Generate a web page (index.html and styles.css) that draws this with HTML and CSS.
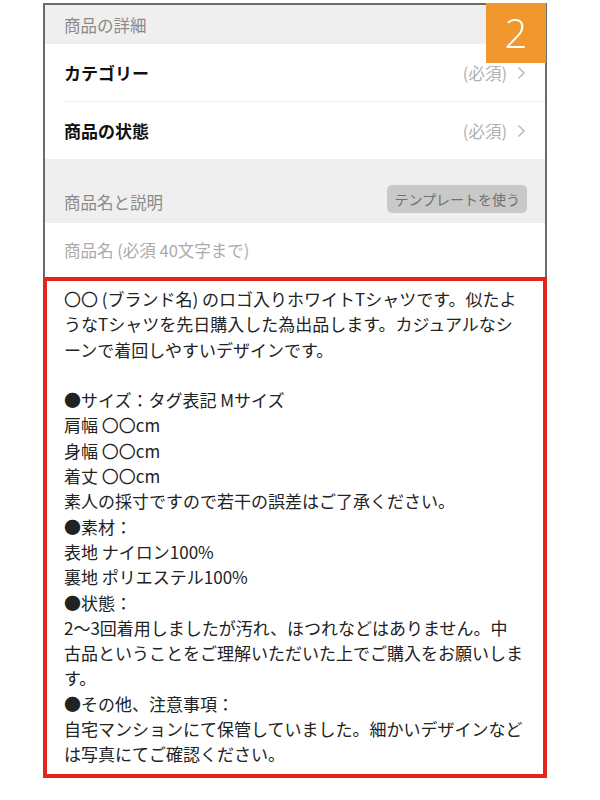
FILE: index.html
```html
<!DOCTYPE html>
<html lang="ja">
<head>
<meta charset="utf-8">
<link rel="stylesheet" href="styles.css">
</head>
<body>
<div class="page">
  <div class="frame">
    <div class="band band-top"><span class="band-label">商品の詳細</span></div>
    <div class="row">
      <span class="row-label">カテゴリー</span>
      <span class="row-right">(必須)<svg class="chev" width="9" height="14" viewBox="0 0 9 14"><polyline points="1.5,1.5 7,7 1.5,12.5" fill="none" stroke="#bcbcbc" stroke-width="1.6"/></svg></span>
    </div>
    <div class="row row-last">
      <span class="row-label">商品の状態</span>
      <span class="row-right">(必須)<svg class="chev" width="9" height="14" viewBox="0 0 9 14"><polyline points="1.5,1.5 7,7 1.5,12.5" fill="none" stroke="#bcbcbc" stroke-width="1.6"/></svg></span>
    </div>
    <div class="band band-mid">
      <span class="band-label">商品名と説明</span>
      <span class="tpl-btn">テンプレートを使う</span>
    </div>
    <div class="field">商品名 (必須 40文字まで)</div>
  </div>
  <div class="desc">
    〇〇 (ブランド名) のロゴ入りホワイトTシャツです。似たよ<br>
    うなTシャツを先日購入した為出品します。カジュアルなシ<br>
    ーンで着回しやすいデザインです。<br>
    <br>
    ●サイズ：タグ表記 Mサイズ<br>
    肩幅 〇〇cm<br>
    身幅 〇〇cm<br>
    着丈 〇〇cm<br>
    素人の採寸ですので若干の誤差はご了承ください。<br>
    ●素材：<br>
    表地 ナイロン100%<br>
    裏地 ポリエステル100%<br>
    ●状態：<br>
    2〜3回着用しましたが汚れ、ほつれなどはありません。中<br>
    古品ということをご理解いただいた上でご購入をお願いしま<br>
    す。<br>
    ●その他、注意事項：<br>
    自宅マンションにて保管していました。細かいデザインなど<br>
    は写真にてご確認ください。
  </div>
  <div class="badge">2</div>
</div>
</body>
</html>
```
FILE: styles.css
```css
html, body {
  margin: 0;
  padding: 0;
  background: #ffffff;
}
body {
  font-family: "Noto Sans CJK JP", "Noto Sans", sans-serif;
  color: #222222;
}
.page {
  position: relative;
  width: 600px;
  height: 800px;
  padding-top: 3px;
  box-sizing: border-box;
}
.frame {
  margin-left: 43px;
  width: 504px;
  box-sizing: border-box;
  border: 2px solid #6b6b6b;
  border-bottom: none;
}
.band {
  background: #efefef;
  display: flex;
  align-items: center;
  justify-content: space-between;
  padding: 0 18px 0 19px;
}
.band-top {
  height: 39px;
}
.band-mid {
  height: 64px;
  align-items: flex-end;
  padding-bottom: 9px;
  box-sizing: border-box;
}
.band-label {
  font-size: 16.5px;
  color: #8a8a8a;
  line-height: 22px;
}
.band-mid .band-label {
  margin-bottom: 1px;
}
.tpl-btn {
  background: #c9c9c9;
  color: #707070;
  font-size: 14px;
  line-height: 28px;
  height: 28px;
  padding: 0 7px;
  border-radius: 5px;
  margin-bottom: 1px;
}
.row {
  height: 57px;
  margin-left: 19px;
  padding-right: 19px;
  display: flex;
  align-items: center;
  justify-content: space-between;
  border-bottom: 1px solid #f0f0f0;
}
.row-last {
  border-bottom: none;
}
.row-label {
  font-size: 17px;
  font-weight: 700;
  color: #111111;
}
.row-right {
  display: flex;
  align-items: center;
  gap: 10px;
  font-size: 16.5px;
  color: #b0b0b0;
}
.field {
  height: 54px;
  display: flex;
  align-items: center;
  padding-left: 19px;
  font-size: 16.5px;
  color: #ababab;
}
.desc {
  margin-left: 43px;
  width: 504px;
  box-sizing: border-box;
  border: 4px solid #e3261d;
  padding: 5px 10px 7px 17px;
  font-size: 17px;
  line-height: 25.3px;
  color: #222222;
  white-space: nowrap;
}
.badge {
  position: absolute;
  left: 486px;
  top: 3px;
  width: 60px;
  height: 60px;
  background: #f0982e;
  color: #ffffff;
  font-family: "Open Sans", "Noto Sans", sans-serif;
  font-weight: 300;
  font-size: 40px;
  line-height: 60px;
  text-align: center;
}
```
